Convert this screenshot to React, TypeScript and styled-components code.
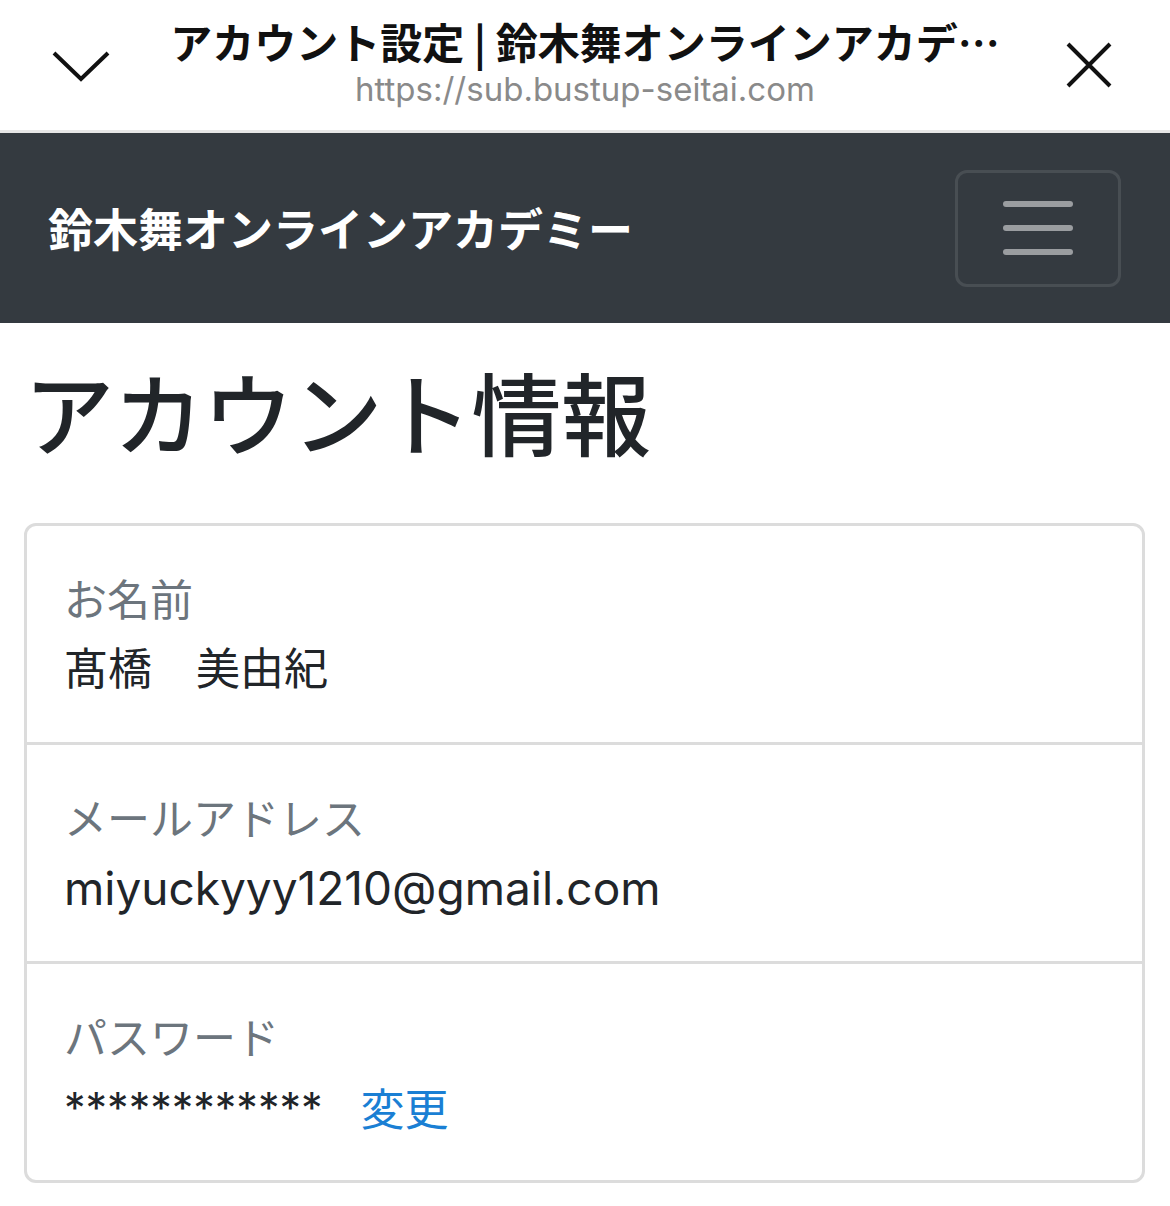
import styled, { createGlobalStyle } from "styled-components";

const GlobalStyle = createGlobalStyle`
  html, body {
    margin: 0;
    padding: 0;
    background: #fff;
  }
  body {
    font-family: "Noto Sans CJK JP", "Noto Sans", "Liberation Sans", sans-serif;
    color: #212529;
  }
`;

interface Field {
  label: string;
  value: string;
  size: number;
  action?: string;
}

const fields: Field[] = [
  { label: "お名前", value: "髙橋　美由紀", size: 44 },
  { label: "メールアドレス", value: "miyuckyyy1210@gmail.com", size: 46 },
  { label: "パスワード", value: "************", size: 43, action: "変更" },
];

export default function App() {
  return (
    <>
      <GlobalStyle />
      <S.BrowserBar>
        <S.BarIcon>
          <svg width="62" height="40" viewBox="0 0 62 40">
            <polyline points="4,8 31,34 58,8" fill="none" stroke="#111" strokeWidth="4" />
          </svg>
        </S.BarIcon>
        <S.BarCenter>
          <S.PageTitle>アカウント設定 | 鈴木舞オンラインアカデ…</S.PageTitle>
          <S.PageUrl>https://sub.bustup-seitai.com</S.PageUrl>
        </S.BarCenter>
        <S.BarIcon>
          <svg width="48" height="48" viewBox="0 0 48 48">
            <path d="M3 3 L45 45 M45 3 L3 45" stroke="#111" strokeWidth="4" fill="none" />
          </svg>
        </S.BarIcon>
      </S.BrowserBar>

      <S.Navbar>
        <S.Brand>鈴木舞オンラインアカデミー</S.Brand>
        <S.Toggler aria-label="menu">
          <span />
          <span />
          <span />
        </S.Toggler>
      </S.Navbar>

      <S.Main>
        <S.Heading>アカウント情報</S.Heading>
        <S.Card>
          {fields.map((f) => (
            <S.Item key={f.label}>
              <S.Label>{f.label}</S.Label>
              <S.Value>
                <S.Text $size={f.size}>{f.value}</S.Text>
                {f.action && <S.Link href="#">{f.action}</S.Link>}
              </S.Value>
            </S.Item>
          ))}
        </S.Card>
      </S.Main>
    </>
  );
}

const S = {
  BrowserBar: styled.header`
    display: flex;
    align-items: center;
    justify-content: space-between;
    height: 130px;
    padding: 0 50px 0 50px;
    border-bottom: 3px solid #e6e6e6;
    background: #fff;
  `,
  BarIcon: styled.div`
    display: flex;
    align-items: center;
    justify-content: center;
    width: 62px;
    svg {
      display: block;
    }
  `,
  BarCenter: styled.div`
    display: flex;
    flex-direction: column;
    align-items: center;
    margin-top: -4px;
  `,
  PageTitle: styled.div`
    font-size: 42px;
    font-weight: 700;
    line-height: 48px;
    color: #111;
    white-space: nowrap;
  `,
  PageUrl: styled.div`
    margin-top: 4px;
    font-family: Inter, "Liberation Sans", sans-serif;
    font-size: 33px;
    line-height: 40px;
    color: #8a8a8a;
  `,
  Navbar: styled.nav`
    display: flex;
    align-items: center;
    justify-content: space-between;
    height: 190px;
    padding: 0 49px 0 48px;
    background: #343a40;
    box-sizing: border-box;
  `,
  Brand: styled.div`
    font-size: 45px;
    font-weight: 700;
    color: #fff;
    line-height: 1.2;
  `,
  Toggler: styled.button`
    display: flex;
    flex-direction: column;
    align-items: center;
    justify-content: center;
    gap: 18px;
    width: 166px;
    height: 117px;
    padding: 0;
    background: transparent;
    border: 3px solid rgba(255, 255, 255, 0.1);
    border-radius: 12px;
    span {
      display: block;
      width: 70px;
      height: 6px;
      border-radius: 3px;
      background: rgba(255, 255, 255, 0.5);
    }
  `,
  Main: styled.main`
    padding: 0 25px 0 24px;
  `,
  Heading: styled.h1`
    margin: 33px 0 59px;
    font-size: 90px;
    font-weight: 500;
    line-height: 108px;
    color: #212529;
    letter-spacing: -0.5px;
  `,
  Card: styled.div`
    border: 3px solid #dcdcdc;
    border-radius: 12px;
    overflow: hidden;
  `,
  Item: styled.div`
    padding: 38px 37px 40px;
    & + & {
      border-top: 3px solid #dcdcdc;
    }
  `,
  Label: styled.div`
    font-size: 43px;
    line-height: 66px;
    margin-bottom: 6px;
    color: #6c757d;
  `,
  Value: styled.div`
    display: flex;
    align-items: center;
    gap: 38px;
    font-family: Inter, "Noto Sans CJK JP", sans-serif;
    line-height: 66px;
    color: #212529;
  `,
  Text: styled.span<{ $size: number }>`
    font-size: ${(p) => p.$size}px;
  `,
  Link: styled.a`
    font-family: "Noto Sans CJK JP", sans-serif;
    font-size: 44px;
    color: #1a7fd4;
    text-decoration: none;
  `,
};
